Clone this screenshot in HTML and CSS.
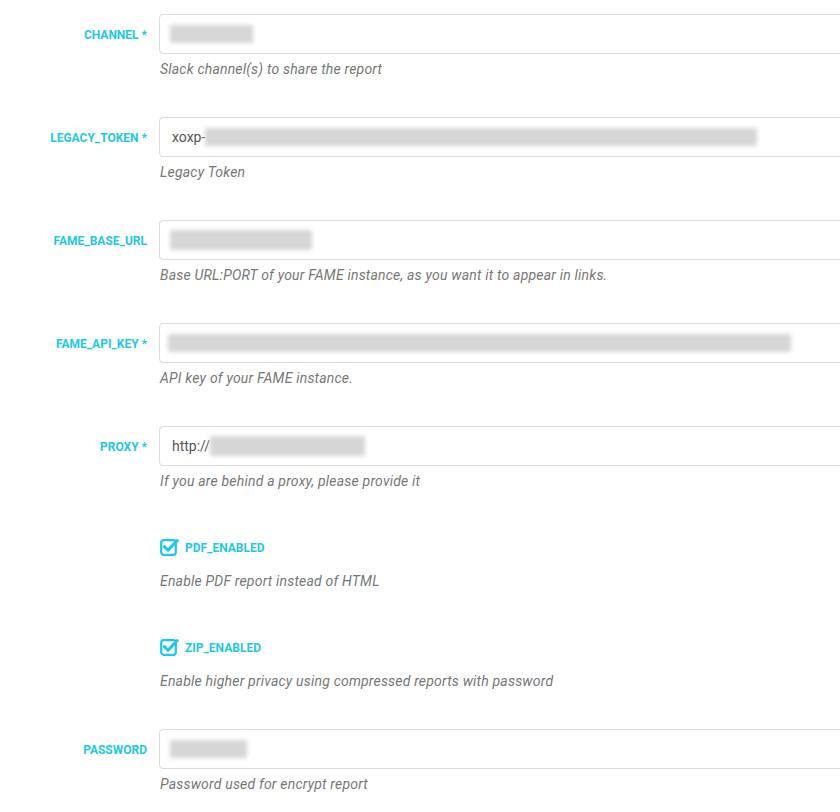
FILE: index.html
```html
<!DOCTYPE html>
<html>
<head>
<meta charset="utf-8">
<link rel="stylesheet" href="styles.css">
</head>
<body>
<form class="form">
  <div class="row">
    <label class="label">CHANNEL *</label>
    <div class="field">
      <div class="input"><span class="blur" style="width:83px"></span></div>
      <div class="help">Slack channel(s) to share the report</div>
    </div>
  </div>
  <div class="row">
    <label class="label">LEGACY_TOKEN *</label>
    <div class="field">
      <div class="input"><span class="val">xoxp-</span><span class="blur" style="width:552px"></span></div>
      <div class="help">Legacy Token</div>
    </div>
  </div>
  <div class="row">
    <label class="label">FAME_BASE_URL</label>
    <div class="field">
      <div class="input"><span class="blur tall" style="width:142px"></span></div>
      <div class="help">Base URL:PORT of your FAME instance, as you want it to appear in links.</div>
    </div>
  </div>
  <div class="row">
    <label class="label">FAME_API_KEY *</label>
    <div class="field">
      <div class="input"><span class="blur wide" style="width:623px"></span></div>
      <div class="help">API key of your FAME instance.</div>
    </div>
  </div>
  <div class="row">
    <label class="label">PROXY *</label>
    <div class="field">
      <div class="input"><span class="val">http://</span><span class="blur tall" style="width:155px"></span></div>
      <div class="help">If you are behind a proxy, please provide it</div>
    </div>
  </div>
  <div class="row check-row">
    <div class="label"></div>
    <div class="field">
      <div class="check">
        <svg class="box" width="19" height="19" viewBox="0 0 19 19"><rect x="1.2" y="3.2" width="14.6" height="14.6" rx="2.5" fill="none" stroke="#1fc8e3" stroke-width="2.2"/><path d="M4.3 9.6 L8 13.3 L17.2 3.6" fill="none" stroke="#1fc8e3" stroke-width="3" stroke-linecap="round" stroke-linejoin="round"/></svg>
        <span class="check-label">PDF_ENABLED</span>
      </div>
      <div class="help">Enable PDF report instead of HTML</div>
    </div>
  </div>
  <div class="row check-row">
    <div class="label"></div>
    <div class="field">
      <div class="check">
        <svg class="box" width="19" height="19" viewBox="0 0 19 19"><rect x="1.2" y="3.2" width="14.6" height="14.6" rx="2.5" fill="none" stroke="#1fc8e3" stroke-width="2.2"/><path d="M4.3 9.6 L8 13.3 L17.2 3.6" fill="none" stroke="#1fc8e3" stroke-width="3" stroke-linecap="round" stroke-linejoin="round"/></svg>
        <span class="check-label">ZIP_ENABLED</span>
      </div>
      <div class="help">Enable higher privacy using compressed reports with password</div>
    </div>
  </div>
  <div class="row">
    <label class="label plain">PASSWORD</label>
    <div class="field">
      <div class="input"><span class="blur" style="width:77px"></span></div>
      <div class="help">Password used for encrypt report</div>
    </div>
  </div>
</form>
</body>
</html>
```
FILE: styles.css
```css
html, body {
  margin: 0;
  padding: 0;
  overflow: hidden;
  background: #fff;
}
body {
  font-family: Roboto, "Liberation Sans", sans-serif;
  width: 840px;
  height: 812px;
}
.form {
  padding-top: 14px;
  display: flex;
  flex-direction: column;
}
.row {
  display: grid;
  grid-template-columns: 147px 720px;
  column-gap: 12px;
  margin-bottom: 38px;
}
.check-row {
  margin-bottom: 38px;
}
.label {
  height: 40px;
  display: flex;
  align-items: center;
  justify-content: flex-end;
  padding-top: 2px;
  box-sizing: border-box;
  font-size: 12px;
  font-weight: 700;
  color: #1fc8e3;
  letter-spacing: 0;
}
.check-row .label {
  height: 37px;
}
.field {
  display: flex;
  flex-direction: column;
}
.input {
  box-sizing: border-box;
  height: 40px;
  border: 1px solid #dcdcdc;
  border-radius: 4px;
  display: flex;
  align-items: center;
  padding: 0 12px;
  font-size: 14px;
  color: #555;
}
.val {
  color: #555;
}
.blur {
  display: inline-block;
  height: 18px;
  background: #d6d6d6;
  filter: blur(2px);
  margin-left: -2px;
}
.val + .blur {
  margin-left: 0;
}
.blur.tall {
  height: 20px;
}
.blur.wide {
  margin-left: -4px;
}
.help {
  margin-top: 5px;
  padding-left: 1px;
  line-height: 20px;
  font-size: 14px;
  font-style: italic;
  letter-spacing: 0.2px;
  color: #777;
}
.check {
  height: 37px;
  display: flex;
  align-items: center;
  padding-left: 1px;
}
.box {
  margin-top: -2px;
}
.check-label {
  margin-left: 6px;
  font-size: 12px;
  font-weight: 700;
  color: #1fc8e3;
}
```
